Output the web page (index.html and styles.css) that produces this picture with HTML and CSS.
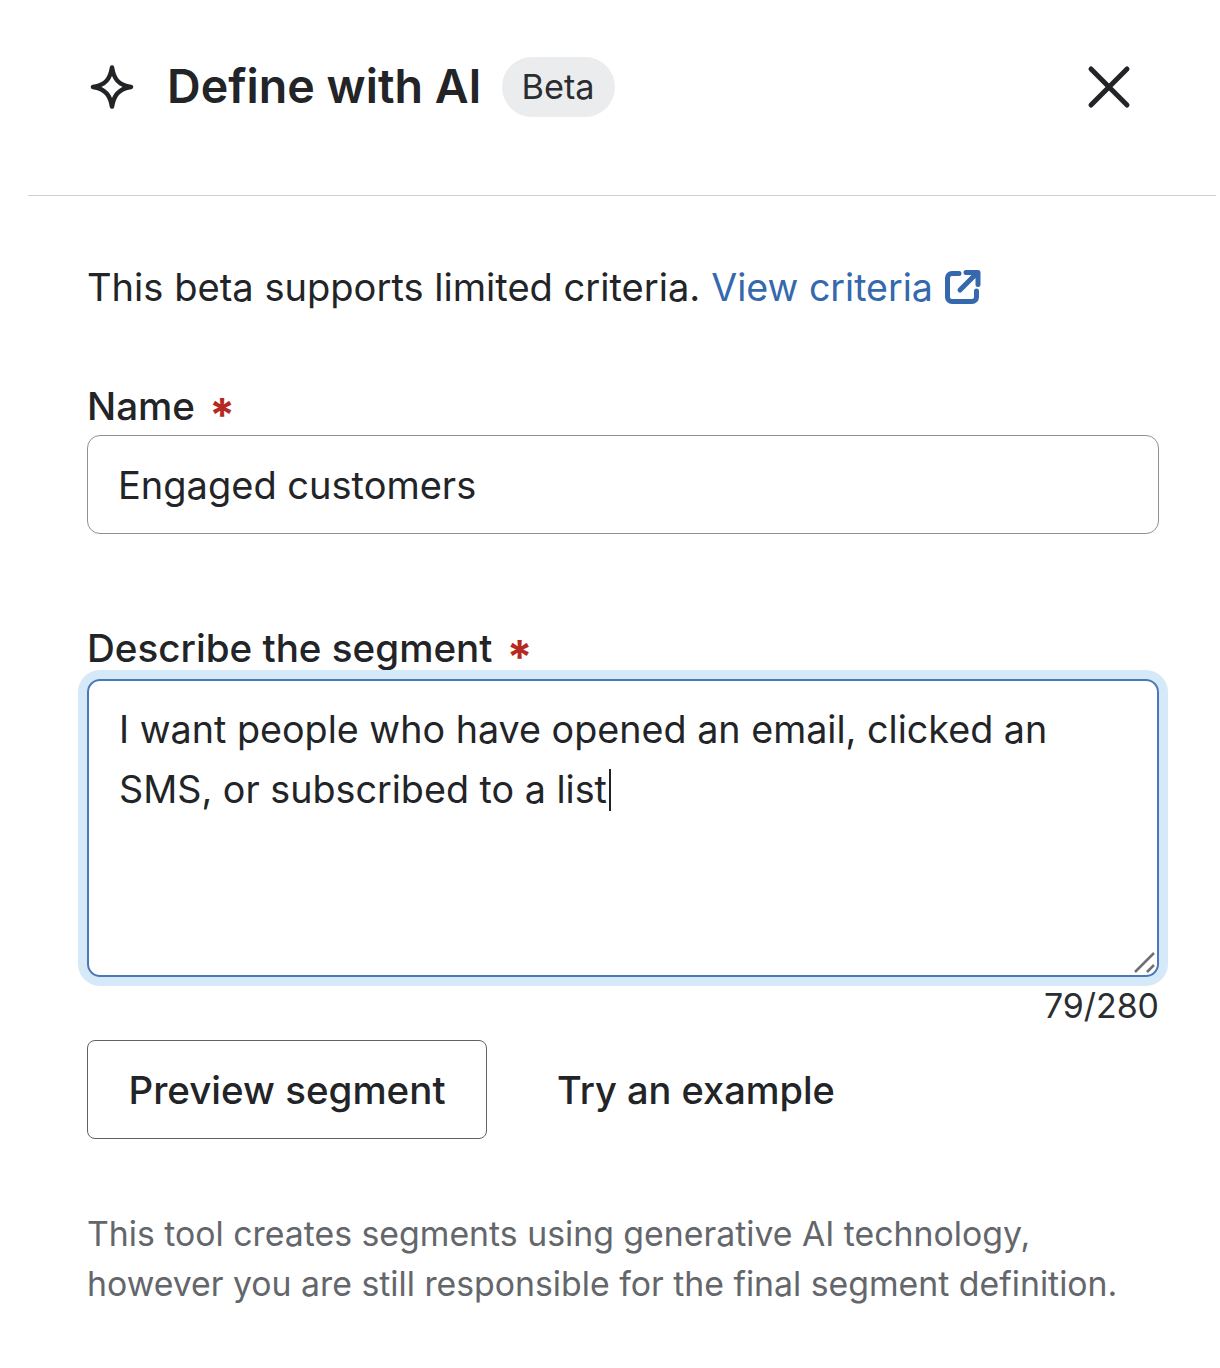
FILE: index.html
```html
<!DOCTYPE html>
<html lang="en">
<head>
<meta charset="utf-8">
<title>Define with AI</title>
<link rel="stylesheet" href="styles.css">
</head>
<body>
<div class="panel">
  <header class="header">
    <div class="title-group">
      <svg class="spark" viewBox="0 0 44 44" aria-hidden="true"><path d="M22 2.500C23.800 13.500 28 20 41 22C28 24 23.800 31 22 41.500C20.200 31 16 24 3 22C16 20 20.200 13.500 22 2.500Z"/></svg>
      <h1 class="title">Define with AI</h1>
      <span class="badge">Beta</span>
    </div>
    <svg class="close" viewBox="0 0 44 44" aria-hidden="true"><path d="M4 4L40 40M40 4L4 40"/></svg>
  </header>
  <main class="content">
    <p class="intro">This beta supports limited criteria. <a class="link">View criteria</a><svg class="ext" viewBox="0 0 36 36" aria-hidden="true"><path class="ext-box" d="M14 4.500H7A4.500 4.500 0 0 0 2.500 9V28A4.500 4.500 0 0 0 7 32.500H27A4.500 4.500 0 0 0 31.500 28V22"/><path class="ext-arrow" d="M15 21L31 5M21 3.500H33V15.500"/></svg></p>
    <div class="field name-field">
      <label class="label">Name <span class="req">*</span></label>
      <div class="input">Engaged customers</div>
    </div>
    <div class="field">
      <label class="label">Describe the segment <span class="req">*</span></label>
      <div class="textarea">I want people who have opened an email, clicked an SMS, or subscribed to a list<span class="caret"></span>
        <svg class="grip" viewBox="0 0 24 24" aria-hidden="true"><path d="M2 21L21 2M14 21L21 14"/></svg>
      </div>
      <div class="counter">79/280</div>
    </div>
    <div class="actions">
      <button class="btn">Preview segment</button>
      <button class="btn-plain">Try an example</button>
    </div>
    <p class="note">This tool creates segments using generative AI technology, however you are still responsible for the final segment definition.</p>
  </main>
</div>
</body>
</html>
```
FILE: styles.css
```css
* { box-sizing: border-box; }
html, body { margin: 0; padding: 0; background: #fff; }
body { font-family: Inter, "Liberation Sans", sans-serif; color: #222427; width: 1220px; height: 1368px; overflow: hidden; }
.panel { padding-left: 28px; padding-right: 4px; }
.header { height: 196px; border-bottom: 1px solid #cfcfd4; display: flex; align-items: flex-start; justify-content: space-between; padding: 57px 85px 0 62px; }
.title-group { display: flex; align-items: center; height: 60px; }
.spark { width: 44px; height: 44px; fill: none; stroke: #222427; stroke-width: 4.500; stroke-linejoin: round; margin-right: 33px; }
.title { margin: 0 0 2px; font-size: 46.600px; font-weight: 600; line-height: 58px; }
.badge { margin-left: 20px; height: 60px; width: 113px; padding-bottom: 2px; border-radius: 30px; background: #ebecee; font-size: 34.300px; display: flex; align-items: center; justify-content: center; color: #2b2d30; }
.close { width: 44px; height: 44px; stroke: #222427; stroke-width: 5; stroke-linecap: round; fill: none; margin-top: 8px; }
.content { padding: 0 57px 0 59px; }
.intro { margin: 65px 0 0; font-size: 38.100px; line-height: 52px; height: 52px; white-space: nowrap; display: flex; align-items: center; }
.link { color: #3568ad; margin-left: 11px; padding-top: 2px; font-size: 37.600px; }
.ext { width: 36px; height: 36px; margin-left: 12px; margin-top: -1px; fill: none; stroke: #3568ad; stroke-width: 5; stroke-linecap: round; stroke-linejoin: round; }
.name-field { margin-top: 70px; }
.label { display: block; font-size: 38.600px; font-weight: 500; line-height: 46px; height: 52px; }
.req { display: inline-block; color: #b5291f; font-size: 46px; font-weight: 700; line-height: 30px; margin-left: 4px; vertical-align: -12px; }
.input { height: 99px; border: 1px solid #8f9196; border-radius: 13px; padding: 0 30px; font-size: 38px; line-height: 99px; }
.name-field + .field { margin-top: 91px; }
.textarea { position: relative; height: 298px; margin-top: 2px; border: 2px solid #4a78b8; border-radius: 13px; box-shadow: 0 0 0 9px #d6e9f9; padding: 19px 30px; font-size: 37.700px; line-height: 59.500px; width: 1072px; }
.caret { display: inline-block; width: 2px; height: 42px; margin-left: 2px; background: #222; vertical-align: -8px; }
.grip { position: absolute; right: 0; bottom: 0; width: 24px; height: 24px; stroke: #6f7074; stroke-width: 2.500; fill: none; }
.counter { text-align: right; font-size: 33.900px; line-height: 44px; margin-top: 7px; color: #2b2d30; }
.actions { display: flex; align-items: center; margin-top: 12px; }
.btn { width: 400px; height: 99px; border: 1px solid #5f6166; border-radius: 8px; background: #fff; font: 500 38.500px Inter, sans-serif; color: #222427; padding: 0; }
.btn-plain { border: 0; background: none; margin-left: 70px; padding: 0; font: 500 38px Inter, sans-serif; color: #222427; }
.note { margin: 70px 0 0; font-size: 33.800px; line-height: 50px; color: #63666b; width: 1060px; }
```
